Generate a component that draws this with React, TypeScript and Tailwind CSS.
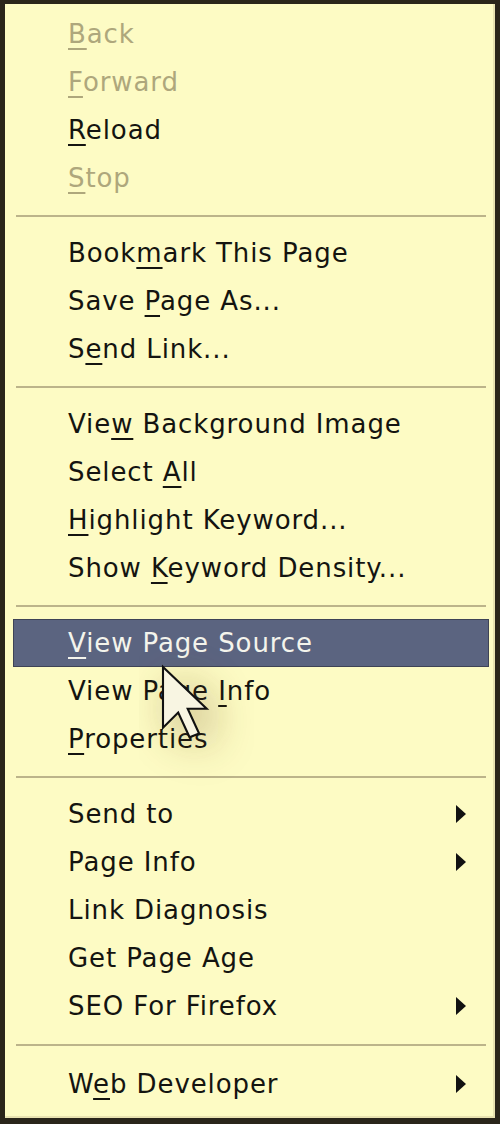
import React from 'react'

type Item = {
  label: string
  key?: number // index of underlined letter
  disabled?: boolean
  sub?: boolean
  active?: boolean
}

const groups: Item[][] = [
  [
    { label: 'Back', key: 0, disabled: true },
    { label: 'Forward', key: 0, disabled: true },
    { label: 'Reload', key: 0 },
    { label: 'Stop', key: 0, disabled: true },
  ],
  [
    { label: 'Bookmark This Page', key: 4 },
    { label: 'Save Page As...', key: 5 },
    { label: 'Send Link...', key: 1 },
  ],
  [
    { label: 'View Background Image', key: 3 },
    { label: 'Select All', key: 7 },
    { label: 'Highlight Keyword...', key: 0 },
    { label: 'Show Keyword Density...', key: 5 },
  ],
  [
    { label: 'View Page Source', key: 0, active: true },
    { label: 'View Page Info', key: 10 },
    { label: 'Properties', key: 0 },
  ],
  [
    { label: 'Send to', sub: true },
    { label: 'Page Info', sub: true },
    { label: 'Link Diagnosis' },
    { label: 'Get Page Age' },
    { label: 'SEO For Firefox', sub: true },
  ],
  [{ label: 'Web Developer', key: 1, sub: true }],
]

const Label = ({ item }: { item: Item }) => {
  if (item.key === undefined) return <>{item.label}</>
  const k = item.key
  return (
    <>
      {item.label.slice(0, k)}
      <span className="underline decoration-2 underline-offset-[5px]">{item.label[k]}</span>
      {item.label.slice(k + 1)}
    </>
  )
}

const Row = ({ item }: { item: Item }) => {
  const color = item.active
    ? 'text-[#f4f4ec]'
    : item.disabled
      ? 'text-[#aea77c]'
      : 'text-[#141410]'
  const box = item.active
    ? 'bg-[#5b6480] border border-[#3e4356] ml-[8px] mr-[4px] pl-[54px] pr-[21px]'
    : 'mx-[8px] pl-[55px] pr-[18px]'
  return (
    <div className={`flex items-center h-[48px] ${box} ${color}`}>
      <span className="flex-1 whitespace-nowrap">
        <Label item={item} />
      </span>
      {item.sub && (
        <svg width="12" height="18" viewBox="0 0 12 18">
          <path d="M1 0 L11 9 L1 18 Z" fill="#111" />
        </svg>
      )}
    </div>
  )
}

const Separator = ({ tall }: { tall?: boolean }) => (
  <div className={`${tall ? 'h-[30px]' : 'h-[27px]'} flex items-center pl-[11px] pr-[7px]`}>
    <div className="h-[2px] w-full bg-[#bcb48a]" />
  </div>
)

const Cursor = () => (
  <svg
    className="absolute left-[138px] top-[643px] pointer-events-none"
    width="130"
    height="150"
    viewBox="0 0 130 150"
  >
    <defs>
      <filter id="blur" x="-80%" y="-80%" width="260%" height="260%">
        <feGaussianBlur stdDeviation="6" />
      </filter>
    </defs>
    <g transform="translate(25 24) scale(3.8)">
      <path
        d="M0 0 L0 16 L4 12 L7 18.5 L9.5 17.5 L6.5 11 L11.5 11 Z"
        fill="#6b4a1c"
        opacity="0.55"
        filter="url(#blur)"
        transform="translate(3 2.5)"
      />
      <path
        d="M0 0 L0 16 L4 12 L7 18.5 L9.5 17.5 L6.5 11 L11.5 11 Z"
        fill="#f8f5e2"
        stroke="#111"
        strokeWidth="0.55"
        strokeLinejoin="miter"
      />
    </g>
  </svg>
)

export default function App() {
  return (
    <div
      className="relative w-[500px] h-[1124px] bg-[#2a251a] pl-[5px] pt-[4px] pr-[5px] pb-[6px]"
      style={{ fontFamily: '"DejaVu Sans", Tahoma, sans-serif' }}
    >
      <div className="h-full bg-[#fdfbc4] border-r-2 border-b-2 border-[#e8e2b0] pt-[6px] text-[26px] leading-none tracking-[0.9px]">
        {groups.map((g, gi) => (
          <React.Fragment key={gi}>
            {gi > 0 && <Separator tall={gi === 5} />}
            {g.map((item) => (
              <Row key={item.label} item={item} />
            ))}
          </React.Fragment>
        ))}
      </div>
      <Cursor />
    </div>
  )
}
